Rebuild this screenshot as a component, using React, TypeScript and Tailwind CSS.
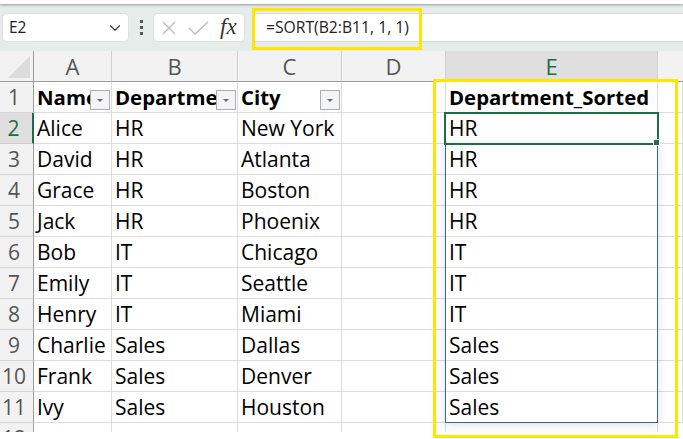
import { ChevronDown } from 'lucide-react';

const rows = [
  ['Alice', 'HR', 'New York', 'HR'],
  ['David', 'HR', 'Atlanta', 'HR'],
  ['Grace', 'HR', 'Boston', 'HR'],
  ['Jack', 'HR', 'Phoenix', 'HR'],
  ['Bob', 'IT', 'Chicago', 'IT'],
  ['Emily', 'IT', 'Seattle', 'IT'],
  ['Henry', 'IT', 'Miami', 'IT'],
  ['Charlie', 'Sales', 'Dallas', 'Sales'],
  ['Frank', 'Sales', 'Denver', 'Sales'],
  ['Ivy', 'Sales', 'Houston', 'Sales'],
];

const gridCols = 'grid grid-cols-[34px_78px_126px_104px_104px_212px_25px]';

function FilterButton() {
  return (
    <span className="absolute top-[8px] right-[1px] w-[20px] h-[20px] bg-[#f4f4f6] border border-[#a9adb8] flex items-center justify-center">
      <svg width="8" height="5" viewBox="0 0 8 5">
        <path d="M1 1h6L4 4z" fill="#6b6b6b" />
      </svg>
    </span>
  );
}

function ColHead({ label, active }: { label: string; active?: boolean }) {
  return (
    <div className={`h-[31px] border-r border-[#cfcfcf] border-b flex items-center justify-center text-[22px] ${active ? 'bg-[#dfdfdf] text-[#1f6e43] border-b-[#9c9c9c]' : 'bg-[#f2f2f2] text-[#555] border-b-[#9c9c9c]'}`}>
      {label}
    </div>
  );
}

function RowHead({ n, active }: { n: number; active?: boolean }) {
  return (
    <div className={`h-[31px] border-r border-b flex items-center justify-center pr-[5px] pt-[1px] text-[21px] ${active ? 'bg-[#dfdfdf] text-[#1f6e43] border-r-[#1f6e43] border-r-2 border-b-[#cfcfcf]' : 'bg-[#f2f2f2] text-[#555] border-r-[#9c9c9c] border-b-[#d6d6d6]'}`}>
      {n}
    </div>
  );
}

function Cell({ children, bold }: { children?: React.ReactNode; bold?: boolean }) {
  return (
    <div className={`relative h-[31px] border-r border-b border-[#dcdcdc] pl-[3px] flex items-center overflow-hidden whitespace-nowrap text-black ${bold ? 'font-bold text-[20.4px] pt-[1px]' : 'text-[21px] pt-[2px]'}`}>
      {children}
    </div>
  );
}

export default function App() {
  return (
    <div className="relative w-[683px] h-[439px] overflow-hidden bg-white font-['Open_Sans','Liberation_Sans',sans-serif]">
      {/* ribbon edge */}
      <div className="h-[4px] bg-white shadow-[0_1px_3px_rgba(0,0,0,0.35)] relative" />

      {/* Formula bar */}
      <div className="h-[47px] bg-[#e6ecea] flex items-center pl-[2px]">
        <div className="w-[127px] h-[29px] bg-white rounded-[5px] border border-[#dde2e0] flex items-center justify-between pl-[6px] pr-[4px] text-[15.5px] text-[#222]">
          <span>E2</span>
          <ChevronDown size={18} strokeWidth={1.5} className="text-[#333]" />
        </div>
        <div className="w-[4px] mx-[10px] flex flex-col gap-[3px] items-center">
          <span className="w-[3px] h-[3px] bg-[#555]" />
          <span className="w-[3px] h-[3px] bg-[#555]" />
          <span className="w-[3px] h-[3px] bg-[#555]" />
        </div>
        <div className="w-[92px] h-[29px] bg-white rounded-[5px] border border-[#dde2e0] flex items-center pl-[7px] gap-[11px]">
          <svg width="16" height="16" viewBox="0 0 16 16" fill="none" stroke="#bdbdbd" strokeWidth="1.4">
            <path d="M2 2l12 12M14 2L2 14" />
          </svg>
          <svg width="21" height="16" viewBox="0 0 21 16" fill="none" stroke="#bdbdbd" strokeWidth="1.4">
            <path d="M1 8l6 6L20 2" />
          </svg>
          <span className="text-[23px] leading-none italic text-[#333] font-['Liberation_Serif',serif] -mt-[3px]">fx</span>
        </div>
        <div className="flex-1 h-[29px] ml-[7px] bg-white border-y border-[#d6dad8] flex items-center pl-[14px] text-[15.7px] text-[#222]">
          =SORT(B2:B11, 1, 1)
        </div>
      </div>

      {/* Sheet */}
      <div className={gridCols}>
        <div className="h-[31px] bg-[#f2f2f2] border-r border-b border-[#9c9c9c] flex items-end justify-end p-[3px]">
          <span className="w-0 h-0 border-l-[22px] border-l-transparent border-b-[22px] border-b-[#dcdcdc]" />
        </div>
        <ColHead label="A" />
        <ColHead label="B" />
        <ColHead label="C" />
        <ColHead label="D" />
        <ColHead label="E" active />
        <div className="h-[31px] bg-[#f2f2f2] border-b border-[#9c9c9c]" />

        <RowHead n={1} />
        <Cell bold>Name<FilterButton /></Cell>
        <Cell bold>Departme<FilterButton /></Cell>
        <Cell bold>City<FilterButton /></Cell>
        <Cell />
        <Cell bold>Department_Sorted</Cell>
        <Cell />

        {rows.map((r, i) => (
          <div key={r[0]} className="contents">
            <RowHead n={i + 2} active={i === 0} />
            <Cell>{r[0]}</Cell>
            <Cell>{r[1]}</Cell>
            <Cell>{r[2]}</Cell>
            <Cell />
            <Cell>{r[3]}</Cell>
            <Cell />
          </div>
        ))}

        {/* row 12 stub */}
        <div className="h-[9px] overflow-hidden">
          <RowHead n={12} />
        </div>
        <div className="h-[9px] border-r border-[#dcdcdc]" />
        <div className="h-[9px] border-r border-[#dcdcdc]" />
        <div className="h-[9px] border-r border-[#dcdcdc]" />
        <div className="h-[9px] border-r border-[#dcdcdc]" />
        <div className="h-[9px] border-r border-[#dcdcdc]" />
        <div className="h-[9px]" />
      </div>

      {/* Spill range and active cell */}
      <div className="absolute left-[445px] top-[143px] w-[213px] h-[280px] border border-[#2f62b5] shadow-[0_2px_10px_rgba(0,0,0,0.12)]" />
      <div className="absolute left-[444px] top-[112px] w-[215px] h-[33px] border-2 border-[#1f6e43]">
        <span className="absolute -right-[3px] -bottom-[3px] w-[5px] h-[5px] bg-[#1f6e43] border border-white box-content" />
      </div>

      {/* Highlight frames */}
      <div className="absolute left-[252px] top-[8px] w-[170px] h-[42px] border-[3px] border-[#ffe600]" />
      <div className="absolute left-[433px] top-[79px] w-[245px] h-[359px] border-[3px] border-[#ffe600]" />
    </div>
  );
}
